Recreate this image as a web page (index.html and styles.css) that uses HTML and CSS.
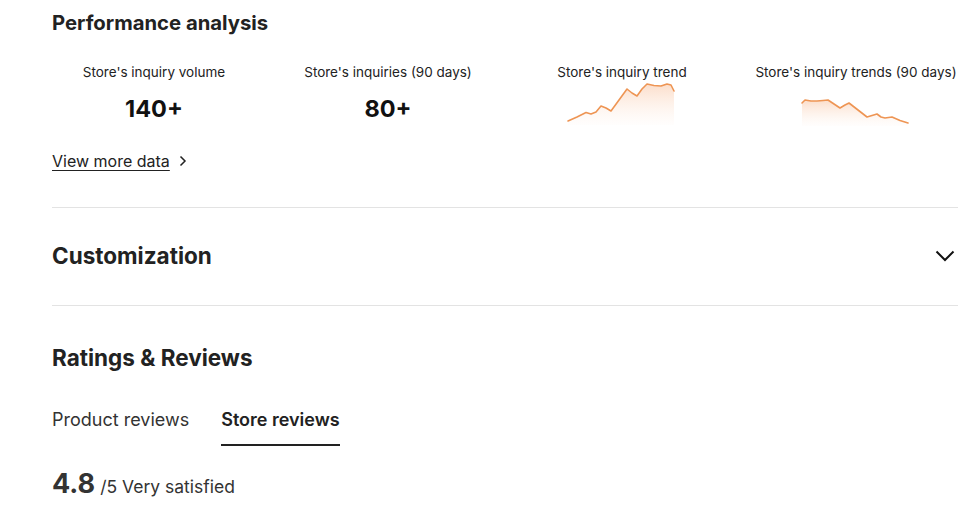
FILE: index.html
```html
<!DOCTYPE html>
<html lang="en">
<head>
<meta charset="utf-8">
<title>Store</title>
<link rel="stylesheet" href="styles.css">
</head>
<body>
<div class="page">
  <section class="perf">
    <h2 class="title-sm">Performance analysis</h2>
    <div class="metrics">
      <div class="metric">
        <div class="metric-label">Store's inquiry volume</div>
        <div class="metric-value">140+</div>
      </div>
      <div class="metric">
        <div class="metric-label">Store's inquiries (90 days)</div>
        <div class="metric-value">80+</div>
      </div>
      <div class="metric">
        <div class="metric-label">Store's inquiry trend</div>
        <svg class="spark spark-a" width="112" height="44" viewBox="567 82 112 44">
          <defs>
            <linearGradient id="ga" x1="0" y1="0" x2="0" y2="1">
              <stop offset="0" stop-color="#f7b58a" stop-opacity="0.45"/>
              <stop offset="1" stop-color="#fde3d2" stop-opacity="0.05"/>
            </linearGradient>
          </defs>
          <path d="M569 121 L578 117 L587 112.5 L592 114 L597 112 L602 106 L607 108 L612 111 L620 100 L628 89 L633 93 L638 96 L643 89 L648 84 L655 85.5 L662 86 L668 84 L672 85 L675 91 L675 125 L569 125 Z" fill="url(#ga)"/>
          <path d="M569 121 L578 117 L587 112.5 L592 114 L597 112 L602 106 L607 108 L612 111 L620 100 L628 89 L633 93 L638 96 L643 89 L648 84 L655 85.5 L662 86 L668 84 L672 85 L675 91" fill="none" stroke="#ee9554" stroke-width="1.6" stroke-linejoin="round" stroke-linecap="round"/>
        </svg>
      </div>
      <div class="metric">
        <div class="metric-label">Store's inquiry trends (90 days)</div>
        <svg class="spark spark-b" width="112" height="30" viewBox="800 96 112 30">
          <defs>
            <linearGradient id="gb" x1="0" y1="0" x2="0" y2="1">
              <stop offset="0" stop-color="#f7b58a" stop-opacity="0.45"/>
              <stop offset="1" stop-color="#fde3d2" stop-opacity="0.05"/>
            </linearGradient>
          </defs>
          <path d="M802 103 L805 100 L811 101 L817 101 L823 100.5 L828 100 L834 104 L840 108 L845 105 L849 103 L858 110 L867 117 L872 115.5 L877 114 L881 117 L885 118 L892 117 L900 120.5 L908 123 L908 126 L802 126 Z" fill="url(#gb)"/>
          <path d="M802 103 L805 100 L811 101 L817 101 L823 100.5 L828 100 L834 104 L840 108 L845 105 L849 103 L858 110 L867 117 L872 115.5 L877 114 L881 117 L885 118 L892 117 L900 120.5 L908 123" fill="none" stroke="#ee9554" stroke-width="1.6" stroke-linejoin="round" stroke-linecap="round"/>
        </svg>
      </div>
    </div>
    <a class="more-link" href="#">
      <span class="more-text">View more data</span>
      <svg class="more-chev" width="10" height="12" viewBox="0 0 10 12"><path d="M2.5 1.5 L7 6 L2.5 10.5" fill="none" stroke="#222" stroke-width="1.5"/></svg>
    </a>
  </section>

  <section class="collapse">
    <h2 class="title-lg">Customization</h2>
    <svg class="chev-down" width="20" height="12" viewBox="0 0 20 12"><path d="M1.5 1.5 L10 10 L18.5 1.5" fill="none" stroke="#111" stroke-width="2"/></svg>
  </section>

  <section class="reviews">
    <h2 class="title-lg">Ratings &amp; Reviews</h2>
    <div class="tabs">
      <div class="tab">Product reviews</div>
      <div class="tab tab-active">Store reviews</div>
    </div>
    <div class="score">
      <span class="score-num">4.8</span>
      <span class="score-rest">/5 Very satisfied</span>
    </div>
  </section>
</div>
</body>
</html>
```

FILE: styles.css
```css
* { box-sizing: border-box; }
html, body { margin: 0; padding: 0; background: #fff; }
body {
  font-family: Inter, "Noto Sans", "Liberation Sans", sans-serif;
  color: #222;
  -webkit-font-smoothing: antialiased;
}
.page {
  padding: 0 19px 0 52px;
  width: 977px;
  overflow: hidden;
}
.title-sm {
  margin: 0;
  padding-top: 11px;
  font-size: 20.3px;
  line-height: 24px;
  font-weight: 700;
  color: #222;
}
.title-lg {
  margin: 0;
  font-size: 22.5px;
  line-height: 28px;
  font-weight: 700;
  color: #222;
}
.metrics {
  display: grid;
  grid-template-columns: repeat(4, 234px);
  margin-left: -15px;
  margin-top: 29px;
}
.metric {
  display: flex;
  flex-direction: column;
  align-items: center;
}
.metric-label {
  font-size: 13.5px;
  line-height: 16px;
  color: #222;
  white-space: nowrap;
}
.metric-value {
  margin-top: 16px;
  font-size: 23.5px;
  line-height: 26px;
  font-weight: 700;
  color: #111;
}
.spark { display: block; }
.spark-a { margin-top: 2px; }
.spark-b { margin-top: 16px; }
.more-link {
  display: inline-flex;
  align-items: center;
  gap: 8px;
  margin-top: 25px;
  color: #222;
  text-decoration: none;
  font-size: 16px;
  line-height: 20px;
}
.more-text { text-decoration: underline; text-underline-offset: 3px; text-decoration-thickness: 1px; }
.more-chev { display: block; }
.perf {
  padding-bottom: 36px;
  border-bottom: 1px solid #e3e3e3;
}
.collapse {
  height: 98px;
  display: flex;
  align-items: center;
  justify-content: space-between;
  border-bottom: 1px solid #e3e3e3;
  padding-bottom: 1px;
}
.chev-down { margin-right: 3px; }
.reviews { padding-top: 38px; }
.tabs {
  display: flex;
  gap: 32px;
  margin-top: 36px;
}
.tab {
  font-size: 18px;
  line-height: 24px;
  padding-bottom: 12px;
  border-bottom: 2px solid transparent;
  color: #333;
}
.tab-active {
  font-weight: 600;
  color: #222;
  border-bottom-color: #222;
}
.score {
  margin-top: 21px;
  display: flex;
  align-items: baseline;
  gap: 5px;
}
.score-num {
  font-size: 27px;
  line-height: 34px;
  font-weight: 700;
  color: #333;
}
.score-rest {
  font-size: 17.5px;
  color: #333;
}
```
